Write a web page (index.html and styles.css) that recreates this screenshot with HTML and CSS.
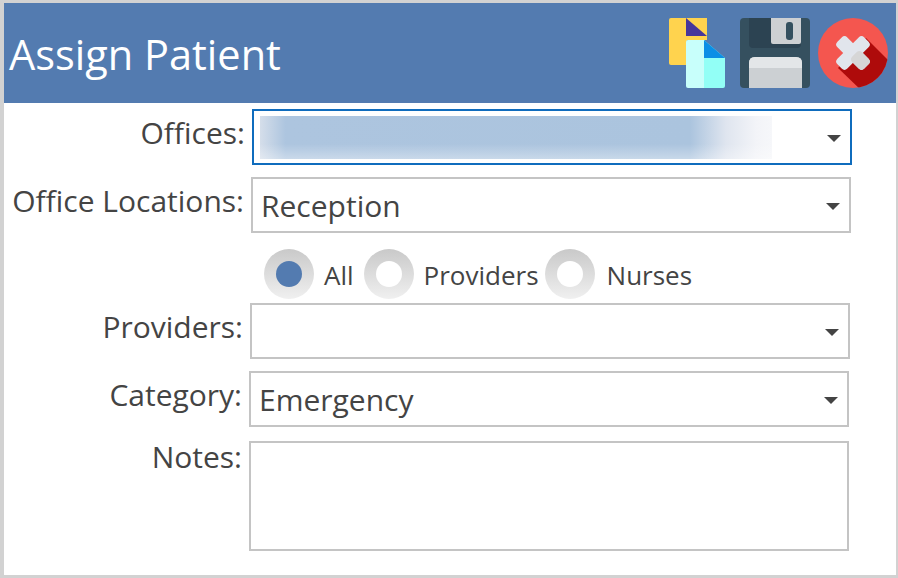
FILE: index.html
```html
<!DOCTYPE HTML>
<html>

<head>
    <meta charset="utf-8">
    <title>Assign Patient</title>
    <link rel="stylesheet" href="styles.css">
</head>

<body>
    <div class="dialog">
        <div class="header">
            <h1 class="title">Assign Patient</h1>
            <div class="tools">
                <!-- copy -->
                <svg class="icon-copy" width="57" height="70" viewBox="0 0 57 70">
                    <path d="M2 0H18V47H2Q0 47 0 45V2Q0 0 2 0Z" fill="#ffd34e"/>
                    <path d="M17 0H38V22H17Z" fill="#ffd34e"/>
                    <path d="M17 0L38 18H17Z" fill="#47369a"/>
                    <path d="M19 22H36V70H19Q17 70 17 68V24Q17 22 19 22Z" fill="#c8fffb"/>
                    <path d="M35 22L56 40V68Q56 70 54 70H35Z" fill="#92fff6"/>
                    <path d="M35 22L56 40H35Z" fill="#0a8fe6"/>
                </svg>
                <!-- save -->
                <svg class="icon-save" width="70" height="70" viewBox="0 0 70 70">
                    <rect width="70" height="70" rx="4" fill="#35505f"/>
                    <path d="M9 0H61V26Q61 30 57 30H13Q9 30 9 26Z" fill="#2c4352"/>
                    <path d="M31 0H61V24Q61 26 59 26H33Q31 26 31 24Z" fill="#cdd0d3"/>
                    <rect x="46" y="4" width="7" height="18" rx="3" fill="#34505f"/>
                    <path d="M9 70V45Q9 39 15 39H56Q62 39 62 45V70Z" fill="#ccd0d3"/>
                    <path d="M9 50V45Q9 39 15 39H56Q62 39 62 45V50Z" fill="#e3e6e8"/>
                </svg>
                <!-- close -->
                <svg class="icon-close" width="70" height="70" viewBox="0 0 70 70">
                    <defs>
                        <clipPath id="disc"><circle cx="35" cy="35" r="35"/></clipPath>
                    </defs>
                    <circle cx="35" cy="35" r="35" fill="#f4564f"/>
                    <path d="M48 20L98 70L70 98L20 50Z" fill="#ae0b0b" clip-path="url(#disc)"/>
                    <rect x="16" y="28" width="38" height="14" rx="4" fill="#e1e5ec" transform="rotate(45 35 35)"/>
                    <rect x="16" y="28" width="38" height="14" rx="4" fill="#e1e5ec" transform="rotate(-45 35 35)"/>
                    <rect x="37" y="28" width="17" height="14" rx="4" fill="#d6d6d6" transform="rotate(45 35 35)"/>
                </svg>
            </div>
        </div>

        <div class="form">
            <div class="row row-offices">
                <label class="label">Offices:</label>
                <div class="field field-focus">
                    <div class="blur"></div>
                    <span class="caret"></span>
                </div>
            </div>
            <div class="row row-locations">
                <label class="label">Office Locations:</label>
                <div class="field">
                    <span class="value">Reception</span>
                    <span class="caret"></span>
                </div>
            </div>
            <div class="radios">
                <span class="radio radio-on"></span><span class="radio-text text-all">All</span>
                <span class="radio"></span><span class="radio-text text-providers">Providers</span>
                <span class="radio"></span><span class="radio-text text-nurses">Nurses</span>
            </div>
            <div class="row row-providers">
                <label class="label">Providers:</label>
                <div class="field">
                    <span class="caret"></span>
                </div>
            </div>
            <div class="row row-category">
                <label class="label">Category:</label>
                <div class="field">
                    <span class="value">Emergency</span>
                    <span class="caret"></span>
                </div>
            </div>
            <div class="row row-notes">
                <label class="label">Notes:</label>
                <textarea class="notes"></textarea>
            </div>
        </div>
    </div>
</body>

</html>
```

FILE: styles.css
```css
html, body {
    margin: 0;
    padding: 0;
}
body {
    background: #d2d2d2;
    font-family: "Open Sans", "Noto Sans", sans-serif;
    color: #444;
}
.dialog {
    box-sizing: border-box;
    width: 892px;
    height: 572px;
    margin: 3px 0 0 4px;
    background: #fff;
}
.header {
    display: flex;
    justify-content: space-between;
    align-items: center;
    height: 100px;
    background: #537bb0;
}
.title {
    margin: 2px 0 0 5px;
    font-size: 41.500px;
    font-weight: normal;
    color: #fff;
}
.tools {
    display: flex;
    gap: 8px;
    margin-right: 8px;
}
.icon-copy {
    margin-right: 6px;
}

.row {
    display: flex;
    align-items: flex-start;
}
.label {
    width: 240px;
    font-size: 30px;
    line-height: 48px;
    text-align: right;
}
.row-notes .label {
    line-height: 32px;
}
.field {
    position: relative;
    box-sizing: border-box;
    width: 600px;
    height: 56px;
    margin-left: 7px;
    border: 2px solid #c4c4c4;
}
.field-focus {
    border-color: #0f6cbd;
}
.value {
    display: block;
    padding-left: 8px;
    font-size: 30px;
    line-height: 54px;
}
.caret {
    position: absolute;
    right: 9px;
    top: 24px;
    border-style: solid;
    border-width: 7px 7px 0;
    border-color: #444 transparent transparent;
}
.blur {
    width: 512px;
    height: 43px;
    margin: 5px 0 0 6px;
    background:
        linear-gradient(rgba(255, 255, 255, 0) 65%, rgba(255, 255, 255, .35) 100%),
        linear-gradient(90deg, #d5deea 0, #adc5df 5%, #abc4de 84%, #dfe5ef 91%, #f3f4f8 97%, #f6f7fa 100%);
}

.row-offices {
    margin-top: 6px;
    margin-left: 1px;
}
.row-locations {
    margin-top: 12px;
}
.row-providers {
    margin-left: -1px;
}
.row-category {
    margin-top: 12px;
    margin-left: -2px;
}
.row-notes {
    margin-top: 14px;
    margin-left: -2px;
}
.notes {
    box-sizing: border-box;
    display: block;
    width: 600px;
    height: 110px;
    margin: 0 0 0 7px;
    border: 2px solid #c4c4c4;
    outline: none;
    resize: none;
}

.radios {
    display: flex;
    align-items: center;
    height: 50px;
    margin: 16px 0 4px 260px;
}
.radio {
    position: relative;
    flex: none;
    width: 50px;
    height: 50px;
    border-radius: 50%;
    background: linear-gradient(#c9c9c9, #f0f0f0);
}
.radio::after {
    content: "";
    position: absolute;
    left: 12px;
    top: 12px;
    width: 26px;
    height: 26px;
    border-radius: 50%;
    background: #fff;
}
.radio-on::after {
    background: #537bb0;
}
.radio-text {
    margin: 2px 8px 0 10px;
    font-size: 26px;
}
.text-all {
    margin-right: 10px;
}
.text-providers {
    margin-right: 6px;
}
.text-nurses {
    margin-left: 12px;
}
```
